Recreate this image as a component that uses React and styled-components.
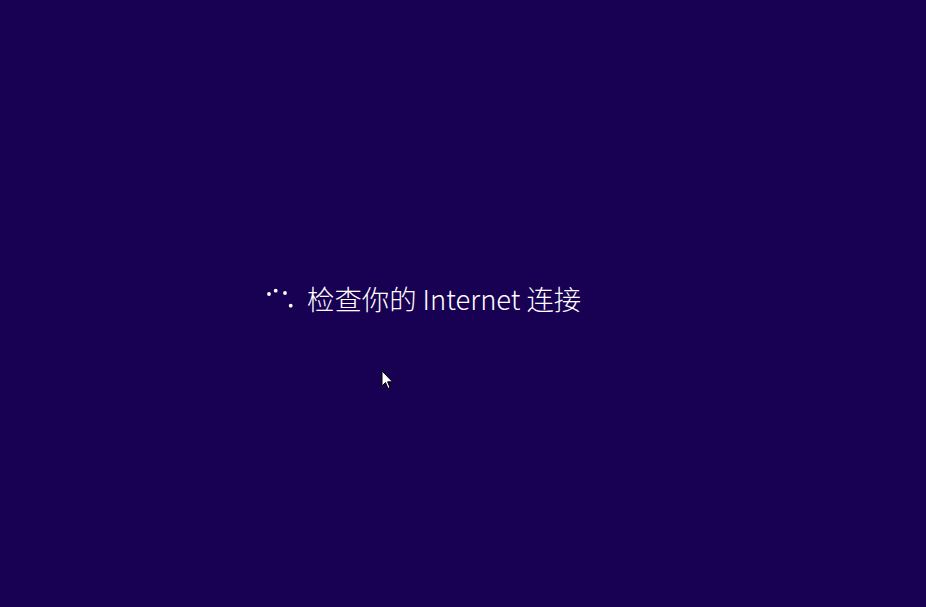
import styled, { createGlobalStyle } from "styled-components";

const Global = createGlobalStyle`
  html, body {
    margin: 0;
    padding: 0;
    background: #180052;
  }
`;

const Screen = styled.div`
  position: relative;
  width: 100vw;
  height: 100vh;
  overflow: hidden;
  background-color: #180052;
  display: flex;
  align-items: flex-start;
  padding: 280px 0 0 266px;
  box-sizing: border-box;
`;

const Status = styled.div`
  display: flex;
  align-items: center;
  gap: 13px;
`;

const Spinner = styled.svg`
  width: 28px;
  height: 20px;
  flex-shrink: 0;
`;

const Message = styled.div`
  color: #ffffff;
  font-family: "Noto Sans CJK SC", "Noto Sans", sans-serif;
  font-weight: 300;
  font-size: 27.4px;
  line-height: 36px;
  white-space: nowrap;
`;

const Cursor = styled.svg`
  position: absolute;
  left: 381px;
  top: 370px;
  width: 13px;
  height: 20px;
`;

export default function App() {
  return (
    <>
      <Global />
      <Screen>
        <Status>
          <Spinner viewBox="0 0 28 20">
            <circle cx="3" cy="6" r="1.9" fill="#fff" />
            <circle cx="9.7" cy="2.7" r="1.9" fill="#fff" />
            <circle cx="19" cy="5" r="1.9" fill="#fff" />
            <circle cx="24.7" cy="17.7" r="1.9" fill="#fff" />
          </Spinner>
          <Message>检查你的 Internet 连接</Message>
        </Status>
        <Cursor viewBox="0 0 13 20">
          <path
            d="M1 1 L1 16 L4.5 12.5 L7 18.5 L9 17.6 L6.6 11.8 L11.5 11.8 Z"
            fill="#fff"
            stroke="#000"
            strokeWidth="1"
            strokeLinejoin="miter"
          />
        </Cursor>
      </Screen>
    </>
  );
}
